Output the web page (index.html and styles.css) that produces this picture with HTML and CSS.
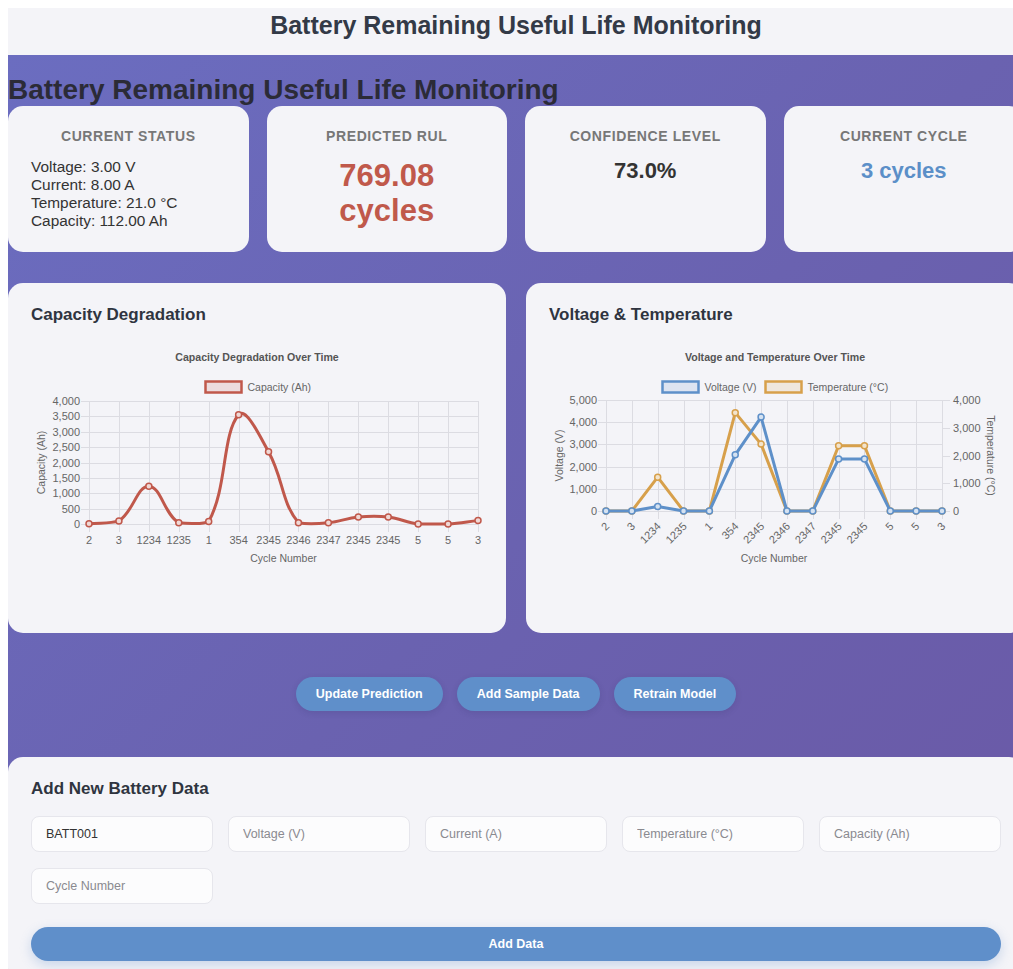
FILE: index.html
```html
<!DOCTYPE html>
<html lang="en">
<head>
<meta charset="utf-8">
<title>Battery Remaining Useful Life Monitoring</title>
<link rel="stylesheet" href="styles.css">
</head>
<body>
<div class="frame">
<div class="page">
  <header class="topbar">
    <h1 class="topbar-title">Battery Remaining Useful Life Monitoring</h1>
  </header>

  <main class="dashboard">
    <h1 class="dash-title">Battery Remaining Useful Life Monitoring</h1>

    <section class="stats">
      <div class="stat-card">
        <h3 class="stat-label">Current Status</h3>
        <div class="status-lines">
          <div>Voltage: 3.00 V</div>
          <div>Current: 8.00 A</div>
          <div>Temperature: 21.0 °C</div>
          <div>Capacity: 112.00 Ah</div>
        </div>
      </div>
      <div class="stat-card centered">
        <h3 class="stat-label">Predicted RUL</h3>
        <div class="stat-value rul">769.08<br>cycles</div>
      </div>
      <div class="stat-card centered">
        <h3 class="stat-label">Confidence Level</h3>
        <div class="stat-value medium">73.0%</div>
      </div>
      <div class="stat-card centered">
        <h3 class="stat-label">Current Cycle</h3>
        <div class="stat-value medium cycle">3 cycles</div>
      </div>
    </section>

    <section class="charts">
      <div class="chart-card">
        <h3 class="chart-heading">Capacity Degradation</h3>
        <svg id="capacityChart" class="chart" width="452" height="260" viewBox="0 0 452 260"></svg>
      </div>
      <div class="chart-card">
        <h3 class="chart-heading">Voltage &amp; Temperature</h3>
        <svg id="vtChart" class="chart" width="452" height="260" viewBox="0 0 452 260"></svg>
      </div>
    </section>

    <div class="actions">
      <button class="pill-btn">Update Prediction</button>
      <button class="pill-btn">Add Sample Data</button>
      <button class="pill-btn">Retrain Model</button>
    </div>

    <section class="form-card">
      <h3 class="form-heading">Add New Battery Data</h3>
      <div class="form-grid">
        <input class="field" type="text" value="BATT001">
        <input class="field" type="text" placeholder="Voltage (V)">
        <input class="field" type="text" placeholder="Current (A)">
        <input class="field" type="text" placeholder="Temperature (°C)">
        <input class="field" type="text" placeholder="Capacity (Ah)">
        <input class="field" type="text" placeholder="Cycle Number">
      </div>
      <button class="submit-btn">Add Data</button>
    </section>
  </main>
</div>
</div>
<script src="script.js"></script>
</body>
</html>
```

FILE: styles.css
```css
html {
  scrollbar-width: none;
}

body {
  margin: 8px 0 0 8px;
  background: #ffffff;
  font-family: "Liberation Sans", Arial, sans-serif;
  color: #333;
}

/* the dashboard is laid out wider than the window; the frame trims the overflow */
.frame {
  width: 1005px;
  overflow: hidden;
}

.page {
  width: 1016px;
}

/* top title bar */
.topbar {
  background: #f4f4f8;
  height: 47px;
  box-sizing: border-box;
  padding-top: 2px;
  text-align: center;
}

.topbar-title {
  margin: 0;
  font-size: 25px;
  font-weight: bold;
  color: #333a47;
  line-height: 30px;
}

/* purple dashboard area */
.dashboard {
  background: linear-gradient(135deg, #6b6dc0 0%, #6a62b0 50%, #6a58a5 100%);
  padding-bottom: 40px;
}

.dash-title {
  margin: 0;
  padding-top: 18px;
  font-size: 28px;
  line-height: 33px;
  font-weight: bold;
  color: #2b2b37;
}

/* summary cards */
.stats {
  display: grid;
  grid-template-columns: repeat(4, 1fr);
  gap: 18px;
}

.stat-card {
  background: #f4f4f8;
  border-radius: 15px;
  padding: 20px 23px 22px;
  min-height: 146px;
  box-sizing: border-box;
}

.stat-card.centered {
  text-align: center;
}

.stat-label {
  margin: 0 0 12px;
  font-size: 14px;
  line-height: 20px;
  letter-spacing: 0.6px;
  text-transform: uppercase;
  text-align: center;
  color: #777;
  font-weight: bold;
}

.status-lines {
  font-size: 15.4px;
  line-height: 18px;
  color: #333;
}

.stat-value {
  font-weight: bold;
}

.stat-value.rul {
  font-size: 31px;
  line-height: 35px;
  color: #c0594b;
}

.stat-value.medium {
  font-size: 22px;
  line-height: 26px;
  color: #333;
}

.stat-value.cycle {
  color: #5b8fc8;
}

/* chart cards */
.charts {
  display: grid;
  grid-template-columns: 1fr 1fr;
  gap: 20px;
  margin-top: 31px;
}

.chart-card {
  background: #f4f4f8;
  border-radius: 15px;
  padding: 22px 23px;
  height: 350px;
  box-sizing: border-box;
}

.chart-heading {
  margin: 0;
  font-size: 17px;
  line-height: 20px;
  font-weight: bold;
  color: #2f3440;
}

.chart {
  display: block;
  margin-top: 15px;
  overflow: visible;
}

.chart .c-title {
  font-family: "Liberation Sans", Arial, sans-serif;
  font-size: 10.6px;
  font-weight: bold;
  fill: #555;
  text-anchor: middle;
}

.chart .c-legend {
  font-family: "Liberation Sans", Arial, sans-serif;
  font-size: 10.5px;
  fill: #666;
}

.chart .c-tick {
  font-family: "Liberation Sans", Arial, sans-serif;
  font-size: 11px;
  fill: #666;
}

.chart .c-axis {
  font-family: "Liberation Sans", Arial, sans-serif;
  font-size: 10.5px;
  fill: #666;
  text-anchor: middle;
}

.chart .c-grid line {
  stroke: #dcdce2;
  stroke-width: 1;
  shape-rendering: crispEdges;
}

/* action buttons */
.actions {
  display: flex;
  justify-content: center;
  gap: 14px;
  margin: 44px 0 46px;
}

.pill-btn {
  height: 34px;
  padding: 0 20px;
  border: none;
  border-radius: 17px;
  background: #5f8fca;
  color: #fff;
  font-family: "Liberation Sans", Arial, sans-serif;
  font-size: 12.5px;
  font-weight: bold;
  box-shadow: 0 2px 6px rgba(40, 40, 90, 0.15);
}

/* data entry form */
.form-card {
  background: #f4f4f8;
  border-radius: 15px;
  padding: 22px 23px;
}

.form-heading {
  margin: 0 0 17px;
  font-size: 17px;
  line-height: 20px;
  font-weight: bold;
  color: #2f3440;
}

.form-grid {
  display: grid;
  grid-template-columns: repeat(5, 1fr);
  column-gap: 15px;
  row-gap: 16px;
}

.field {
  height: 36px;
  box-sizing: border-box;
  padding: 0 14px;
  border: 1px solid #e6e6ec;
  border-radius: 8px;
  background: #fcfcfd;
  font-family: "Liberation Sans", Arial, sans-serif;
  font-size: 12.5px;
  color: #333;
  min-width: 0;
}

.field::placeholder {
  color: #8a8a90;
}

.submit-btn {
  display: block;
  width: 100%;
  height: 34px;
  margin-top: 23px;
  border: none;
  border-radius: 17px;
  background: #5f8fca;
  color: #fff;
  font-family: "Liberation Sans", Arial, sans-serif;
  font-size: 12.5px;
  font-weight: bold;
  box-shadow: 0 4px 12px rgba(95, 143, 202, 0.3);
}
```

FILE: script.js
```js
(function () {
  var NS = 'http://www.w3.org/2000/svg';
  var cycles = ['2', '3', '1234', '1235', '1', '354', '2345', '2346', '2347', '2345', '2345', '5', '5', '3'];

  var capacity = [10, 100, 1230, 40, 80, 3550, 2350, 40, 40, 230, 230, 0, 0, 110];
  var voltage = [0, 0, 200, 0, 0, 2530, 4230, 0, 0, 2340, 2340, 0, 0, 0];
  var temperature = [0, 0, 1220, 0, 0, 3545, 2410, 0, 0, 2350, 2350, 0, 0, 0];

  function node(parent, tag, attrs, text) {
    var n = document.createElementNS(NS, tag);
    for (var k in attrs) n.setAttribute(k, attrs[k]);
    if (text != null) n.textContent = text;
    parent.appendChild(n);
    return n;
  }

  function fmt(v) {
    return String(v).replace(/\B(?=(\d{3})+(?!\d))/g, ',');
  }

  // Cubic spline through the points, same weighting as a tension-0.4 line chart
  function splinePath(pts, tension, top, bottom) {
    var cps = pts.map(function (p, i) {
      var prev = pts[i - 1] || p;
      var next = pts[i + 1] || p;
      var d01 = Math.hypot(p.x - prev.x, p.y - prev.y);
      var d12 = Math.hypot(next.x - p.x, next.y - p.y);
      var s01 = d01 / (d01 + d12);
      var s12 = d12 / (d01 + d12);
      if (!isFinite(s01)) s01 = 0;
      if (!isFinite(s12)) s12 = 0;
      var fa = tension * s01;
      var fb = tension * s12;
      function clampY(y) { return Math.max(top, Math.min(bottom, y)); }
      return {
        px: p.x - fa * (next.x - prev.x),
        py: clampY(p.y - fa * (next.y - prev.y)),
        nx: p.x + fb * (next.x - prev.x),
        ny: clampY(p.y + fb * (next.y - prev.y))
      };
    });
    var d = 'M' + pts[0].x.toFixed(2) + ',' + pts[0].y.toFixed(2);
    for (var i = 1; i < pts.length; i++) {
      d += ' C' + cps[i - 1].nx.toFixed(2) + ',' + cps[i - 1].ny.toFixed(2) +
        ' ' + cps[i].px.toFixed(2) + ',' + cps[i].py.toFixed(2) +
        ' ' + pts[i].x.toFixed(2) + ',' + pts[i].y.toFixed(2);
    }
    return d;
  }

  function linePath(pts) {
    return pts.map(function (p, i) {
      return (i ? 'L' : 'M') + p.x.toFixed(2) + ',' + p.y.toFixed(2);
    }).join(' ');
  }

  function drawChart(svg, cfg) {
    var W = 452;
    var x0 = cfg.left, x1 = cfg.right, yT = cfg.top, yB = cfg.bottom;
    var n = cycles.length;
    var step = (x1 - x0) / (n - 1);
    function xAt(i) { return x0 + i * step; }

    node(svg, 'text', { x: W / 2, y: 21, 'class': 'c-title' }, cfg.title);

    cfg.series.forEach(function (s) {
      node(svg, 'rect', {
        x: s.legendX, y: 41.5, width: 36, height: 11,
        fill: s.fill, stroke: s.color, 'stroke-width': 2.5
      });
      node(svg, 'text', { x: s.legendX + 42, y: 51, 'class': 'c-legend' }, s.label);
    });

    var grid = node(svg, 'g', { 'class': 'c-grid' });
    for (var i = 0; i < n; i++) {
      var gx = Math.round(xAt(i)) + 0.5;
      node(grid, 'line', { x1: gx, x2: gx, y1: yT, y2: yB + 8 });
    }

    var axisL = cfg.axisLeft;
    for (var v = 0; v <= axisL.max; v += axisL.step) {
      var y = yB - v / axisL.max * (yB - yT);
      var gy = Math.round(y) + 0.5;
      node(grid, 'line', { x1: x0 - 8, x2: x1, y1: gy, y2: gy });
      node(svg, 'text', { x: x0 - 9, y: y + 4, 'class': 'c-tick', 'text-anchor': 'end' }, fmt(v));
    }

    if (cfg.axisRight) {
      var axisR = cfg.axisRight;
      for (var r = 0; r <= axisR.max; r += axisR.step) {
        var ry = yB - r / axisR.max * (yB - yT);
        var rgy = Math.round(ry) + 0.5;
        node(grid, 'line', { x1: x1, x2: x1 + 8, y1: rgy, y2: rgy });
        node(svg, 'text', { x: x1 + 11, y: ry + 4, 'class': 'c-tick' }, fmt(r));
      }
      node(svg, 'text', {
        x: 438, y: (yT + yB) / 2, 'class': 'c-axis',
        transform: 'rotate(90 438 ' + (yT + yB) / 2 + ')'
      }, axisR.title);
    }

    cycles.forEach(function (c, i) {
      var lx = xAt(i);
      if (cfg.rotateLabels) {
        var ax = lx + 4, ay = yB + 16;
        node(svg, 'text', {
          x: ax, y: ay, 'class': 'c-tick', 'text-anchor': 'end',
          transform: 'rotate(-45 ' + ax + ' ' + ay + ')'
        }, c);
      } else {
        node(svg, 'text', { x: lx, y: yB + 20, 'class': 'c-tick', 'text-anchor': 'middle' }, c);
      }
    });

    node(svg, 'text', { x: (x0 + x1) / 2, y: 222, 'class': 'c-axis' }, 'Cycle Number');
    var cy = (yT + yB) / 2;
    node(svg, 'text', {
      x: 14, y: cy, 'class': 'c-axis',
      transform: 'rotate(-90 14 ' + cy + ')'
    }, axisL.title);

    // later series are painted first so the first one sits on top
    cfg.series.slice().reverse().forEach(function (s) {
      var axis = s.axis === 'right' ? cfg.axisRight : axisL;
      var pts = s.data.map(function (val, i) {
        return { x: xAt(i), y: yB - val / axis.max * (yB - yT) };
      });
      var d = s.smooth ? splinePath(pts, 0.4, yT, yB) : linePath(pts);
      node(svg, 'path', {
        d: d, fill: 'none', stroke: s.color, 'stroke-width': 3,
        'stroke-linejoin': 'round', 'stroke-linecap': 'round'
      });
      pts.forEach(function (p) {
        node(svg, 'circle', {
          cx: p.x, cy: p.y, r: 3, fill: s.pointFill, stroke: s.color, 'stroke-width': 1.5
        });
      });
    });
  }

  drawChart(document.getElementById('capacityChart'), {
    title: 'Capacity Degradation Over Time',
    left: 58, right: 447, top: 61, bottom: 184,
    rotateLabels: false,
    axisLeft: { max: 4000, step: 500, title: 'Capacity (Ah)' },
    series: [{
      label: 'Capacity (Ah)', data: capacity, color: '#c0584b',
      fill: 'rgba(192, 88, 75, 0.15)', pointFill: '#f0d9d6',
      legendX: 174.5, smooth: true
    }]
  });

  drawChart(document.getElementById('vtChart'), {
    title: 'Voltage and Temperature Over Time',
    left: 57, right: 393, top: 60, bottom: 171,
    rotateLabels: true,
    axisLeft: { max: 5000, step: 1000, title: 'Voltage (V)' },
    axisRight: { max: 4000, step: 1000, title: 'Temperature (°C)' },
    series: [{
      label: 'Voltage (V)', data: voltage, color: '#5e90c9',
      fill: 'rgba(94, 144, 201, 0.15)', pointFill: '#d5e2f1',
      legendX: 113.5, axis: 'left', smooth: false
    }, {
      label: 'Temperature (°C)', data: temperature, color: '#d7a04b',
      fill: 'rgba(215, 160, 75, 0.15)', pointFill: '#f3e4cc',
      legendX: 216.5, axis: 'right', smooth: false
    }]
  });
})();
```
